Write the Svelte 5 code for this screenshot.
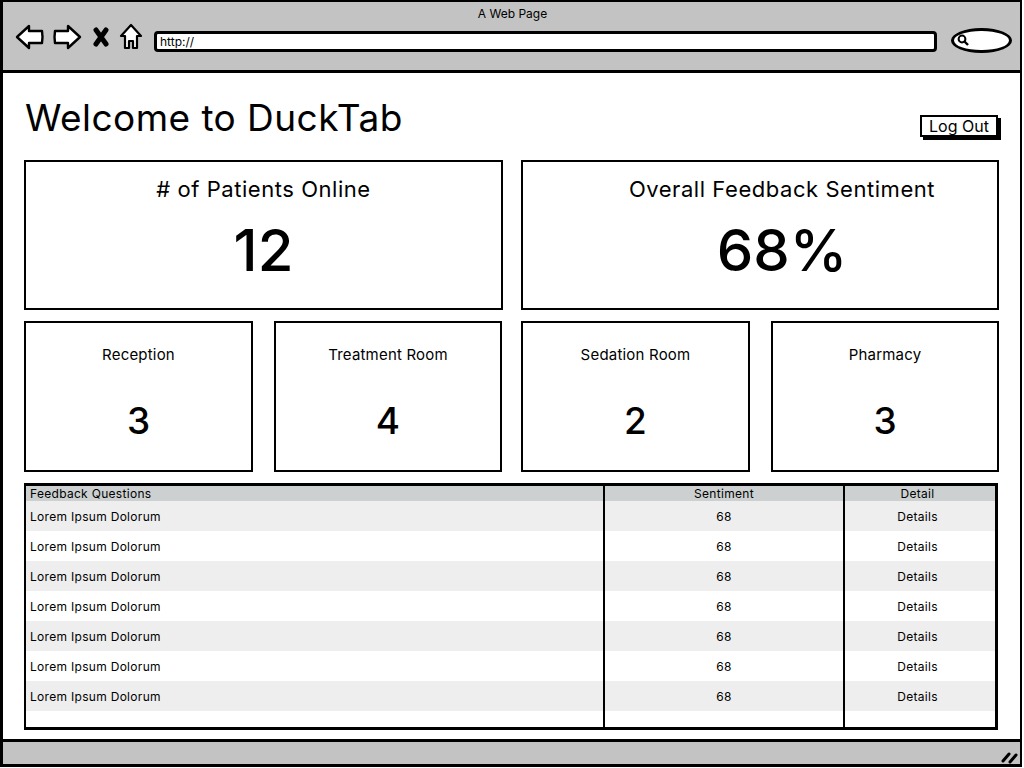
<script>
  const topCards = [
    { title: '# of Patients Online', value: '12' },
    { title: 'Overall Feedback Sentiment', value: '68%', offset: true }
  ];
  const roomGroups = [
    [{ title: 'Reception', value: '3' }, { title: 'Treatment Room', value: '4' }],
    [{ title: 'Sedation Room', value: '2' }, { title: 'Pharmacy', value: '3' }]
  ];
  const rows = Array(7).fill({ question: 'Lorem Ipsum Dolorum', sentiment: '68', detail: 'Details' });
</script>

<div class="page">
  <div class="window">
    <header class="chrome">
      <div class="page-title">A Web Page</div>
      <div class="toolbar">
        <svg class="nav" width="30" height="26" viewBox="0 0 30 26">
          <path d="M2 13 L14 2 L14 7 L27 7 Q28 13 27 19 L14 19 L14 24 Z" fill="#fff" stroke="#000" stroke-width="2.4" stroke-linejoin="round" />
        </svg>
        <svg class="nav" width="30" height="26" viewBox="0 0 30 26">
          <path d="M28 13 L16 2 L16 7 L3 7 Q2 13 3 19 L16 19 L16 24 Z" fill="#fff" stroke="#000" stroke-width="2.4" stroke-linejoin="round" />
        </svg>
        <svg class="stop" width="18" height="20" viewBox="0 0 18 20">
          <path d="M4 3 L14 17 M14 3 L4 17" stroke="#000" stroke-width="5" stroke-linecap="round" />
        </svg>
        <svg class="home" width="24" height="28" viewBox="0 0 24 28">
          <path d="M12 2 L22 13 L18 13 L18 25 L14 25 L14 18 L10 18 L10 25 L6 25 L6 13 L2 13 Z" fill="#fff" stroke="#000" stroke-width="2.2" stroke-linejoin="round" />
        </svg>
        <div class="url">http://</div>
        <div class="search">
          <svg width="14" height="14" viewBox="0 0 14 14">
            <circle cx="6" cy="6" r="3.4" fill="none" stroke="#000" stroke-width="2" />
            <path d="M8.5 8.5 L12 12" stroke="#000" stroke-width="2.4" />
          </svg>
        </div>
      </div>
    </header>

    <main class="content">
      <div class="heading">
        <h1>Welcome to DuckTab</h1>
        <button class="logout">Log Out</button>
      </div>

      <section class="card-row">
        {#each topCards as card}
          <div class="card big" class:offset={card.offset}>
            <div class="card-title">{card.title}</div>
            <div class="card-value">{card.value}</div>
          </div>
        {/each}
      </section>

      <section class="card-row rooms">
        {#each roomGroups as group}
          <div class="room-group">
            {#each group as room}
              <div class="card small">
                <div class="card-title">{room.title}</div>
                <div class="card-value">{room.value}</div>
              </div>
            {/each}
          </div>
        {/each}
      </section>

      <div class="table-wrap">
        <table>
          <thead>
            <tr>
              <th class="left">Feedback Questions</th>
              <th class="col-sent">Sentiment</th>
              <th class="col-detail">Detail</th>
            </tr>
          </thead>
          <tbody>
            {#each rows as row}
              <tr>
                <td class="left">{row.question}</td>
                <td>{row.sentiment}</td>
                <td class="col-detail">{row.detail}</td>
              </tr>
            {/each}
            <tr class="filler"><td></td><td></td><td></td></tr>
          </tbody>
        </table>
      </div>
    </main>

    <footer class="status">
      <svg width="18" height="14" viewBox="0 0 18 14">
        <path d="M2 11 L8 4 M9 12 L15 5" stroke="#000" stroke-width="3" stroke-linecap="round" />
      </svg>
    </footer>
  </div>
</div>

<style>
  :global(body) {
    margin: 0;
    background: #fff;
  }

  .page {
    width: 1024px;
    height: 768px;
    overflow: hidden;
  }

  .window {
    box-sizing: border-box;
    width: 1022px;
    height: 767px;
    display: flex;
    flex-direction: column;
    border: 3px solid #000;
    border-right-width: 2px;
    border-top-width: 2px;
    font-family: "Inter", "Lato", sans-serif;
    color: #000;
  }

  .chrome {
    box-sizing: border-box;
    height: 72px;
    background: #c3c3c3;
    border-bottom: 3px solid #000;
  }

  .page-title {
    text-align: center;
    font-size: 12px;
    line-height: 14px;
    padding-top: 5px;
    padding-left: 2px;
  }

  .toolbar {
    display: flex;
    align-items: center;
    height: 30px;
    padding: 1px 0 0 12px;
  }

  .nav { margin-right: 7px; }
  .stop { margin-left: 3px; margin-right: 9px; }
  .home { margin-right: 11px; }

  .url {
    box-sizing: border-box;
    width: 783px;
    height: 21px;
    margin-top: 8px;
    background: #fff;
    border: 3px solid #000;
    border-radius: 4px;
    font-size: 12px;
    line-height: 15px;
    padding-left: 3px;
  }

  .search {
    box-sizing: border-box;
    width: 61px;
    height: 25px;
    margin-top: 6px;
    margin-left: 14px;
    background: #fff;
    border: 3px solid #000;
    border-radius: 30px / 50%;
    display: flex;
    align-items: center;
    padding-left: 2px;
  }

  .content {
    flex: 1;
    display: flex;
    flex-direction: column;
    padding: 0 20px 0 21px;
  }

  .heading {
    height: 87px;
    display: flex;
    justify-content: space-between;
  }

  h1 {
    margin: 22px 0 0 1px;
    font-size: 37px;
    font-weight: 400;
    letter-spacing: 0.45px;
    line-height: 46px;
    white-space: nowrap;
  }

  .logout {
    align-self: flex-start;
    box-sizing: border-box;
    width: 78px;
    height: 22px;
    margin-top: 42px;
    margin-right: 2px;
    padding: 0;
    background: #fff;
    color: #000;
    border: 2px solid #000;
    box-shadow: 3px 3px 0 #000;
    font: inherit;
    font-size: 16px;
    line-height: 18px;
  }

  .card-row {
    display: grid;
    grid-template-columns: 479px 478px;
    column-gap: 18px;
  }

  .rooms { margin-top: 11px; }

  .room-group {
    display: grid;
    grid-template-columns: 229px 228px;
    column-gap: 21px;
  }

  .card {
    box-sizing: border-box;
    border: 2px solid #000;
    text-align: center;
  }

  .big { height: 150px; }
  .small { height: 151px; }
  .offset { padding-left: 44px; }

  .big .card-title {
    font-size: 22px;
    letter-spacing: 0.55px;
    line-height: 28px;
    margin-top: 13px;
  }

  .big .card-value {
    font-size: 58px;
    font-weight: 500;
    line-height: 72px;
    margin-top: 11px;
  }

  .small .card-title {
    font-size: 15px;
    letter-spacing: 0.2px;
    line-height: 20px;
    margin-top: 22px;
  }

  .small .card-value {
    font-size: 37px;
    font-weight: 500;
    line-height: 46px;
    margin-top: 33px;
  }

  .table-wrap {
    box-sizing: border-box;
    height: 247px;
    width: 974px;
    margin-top: 11px;
    border: 2px solid #000;
    border-top-width: 3px;
    border-right-width: 3px;
    border-bottom-width: 3px;
  }

  table {
    width: 100%;
    height: 100%;
    border-collapse: collapse;
    table-layout: fixed;
    font-size: 12px;
    letter-spacing: 0.3px;
  }

  th {
    height: 15px;
    padding: 0;
    background: #ccd0d0;
    font-weight: 400;
    line-height: 15px;
  }

  td {
    height: 30px;
    padding: 2px 0 0;
    box-sizing: border-box;
    text-align: center;
  }

  .left {
    text-align: left;
    padding-left: 4px;
  }

  .col-sent { width: 238px; }

  .col-detail {
    width: 145px;
    padding-right: 5px;
  }

  th + th, td + td {
    border-left: 2px solid #000;
  }

  tbody tr:nth-child(odd):not(.filler) { background: #eeeeee; }

  .filler td { height: auto; }

  .status {
    box-sizing: border-box;
    height: 26px;
    margin-top: 9px;
    background: #c3c3c3;
    border-top: 3px solid #000;
    display: flex;
    justify-content: flex-end;
    align-items: flex-end;
    padding-right: 1px;
  }
</style>
